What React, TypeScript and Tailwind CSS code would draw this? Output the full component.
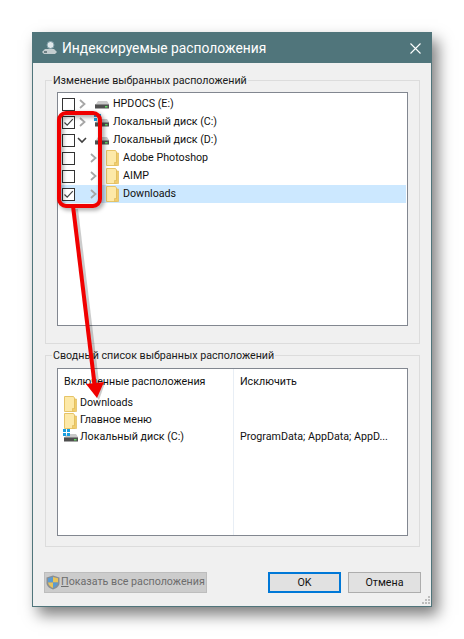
import type { ReactNode } from 'react';

function Chevron(props: { open?: boolean }) {
  if (props.open) {
    return (
      <svg width="10" height="10" viewBox="0 0 10 10" className="shrink-0">
        <path d="M1 3 L5 7 L9 3" fill="none" stroke="#404040" strokeWidth="1.6" />
      </svg>
    );
  }
  return (
    <svg width="10" height="10" viewBox="0 0 10 10" className="shrink-0">
      <path d="M3 1 L7.5 5 L3 9" fill="none" stroke="#a6a6a6" strokeWidth="1.8" />
    </svg>
  );
}

function CheckBox(props: { checked?: boolean }) {
  return (
    <div className="w-[13px] h-[13px] shrink-0 border border-[#333333] bg-white flex items-center justify-center">
      {props.checked ? (
        <svg width="11" height="11" viewBox="0 0 11 11">
          <path d="M1.5 5.5 L4.2 8.2 L9.8 2.2" fill="none" stroke="#444444" strokeWidth="1.2" />
        </svg>
      ) : null}
    </div>
  );
}

function Folder() {
  return (
    <svg width="13" height="16" viewBox="0 0 13 16" className="shrink-0">
      <path d="M0.5 0.5 H9.5 L10.5 2 V15.5 H0.5 Z" fill="#fde9a8" stroke="#e6c468" />
      <path d="M10.5 3 H12.5 V15.5 H8.5 V12.5 H10.5 Z" fill="#f1cd6d" stroke="#e0bc5c" strokeWidth="0.7" />
    </svg>
  );
}

function Drive(props: { windows?: boolean }) {
  return (
    <svg width="16" height="16" viewBox="0 0 16 16" className="shrink-0">
      <path d="M2 8 L4 5 H13 L15 8 Z" fill="#c9c9c9" />
      <rect x="1" y="8" width="14" height="4.5" fill="#4f4f4f" />
      <rect x="1" y="8" width="14" height="1" fill="#8a8a8a" />
      <rect x="11" y="10" width="2.5" height="1.5" fill="#63d863" />
      {props.windows ? (
        <g fill="#1a9fe0">
          <rect x="0" y="0" width="3" height="3" />
          <rect x="4" y="0" width="3" height="3" />
          <rect x="0" y="4" width="3" height="3" />
          <rect x="4" y="4" width="3" height="3" />
        </g>
      ) : null}
    </svg>
  );
}

function Row(props: { checked?: boolean; open?: boolean; nested?: boolean; selected?: boolean; icon: ReactNode; label: string }) {
  const { checked, open, nested, selected, icon, label } = props;
  return (
    <div className={selected ? 'h-[18px] flex items-center pl-[4px] bg-[#cce8ff]' : 'h-[18px] flex items-center pl-[4px]'}>
      <CheckBox checked={checked} />
      <div className={nested ? 'w-[31px] pl-[13px] flex items-center' : 'w-[19px] pl-[2px] flex items-center'}>
        <Chevron open={open} />
      </div>
      <div className={nested ? 'w-[17px] flex items-center' : 'w-[19px] flex items-center'}>{icon}</div>
      <span>{label}</span>
    </div>
  );
}

function Group(props: { title: string; className: string; children: ReactNode }) {
  return (
    <div className={'relative border border-[#dcdcdc] ' + props.className}>
      <span className="absolute left-[6px] top-[-9px] bg-[#f0f0f0] px-px leading-[18px] text-[#1a1a1a] whitespace-nowrap">{props.title}</span>
      {props.children}
    </div>
  );
}

export default function App() {
  return (
    <div className="relative w-[464px] h-[639px] bg-white pl-[32px] pt-[32px] text-[10.7px] text-[#111111] overflow-hidden" style={{ fontFamily: 'Roboto, "Noto Sans", sans-serif' }}>
      <div className="w-[400px] h-[575px] flex flex-col border border-[#50757b] bg-[#f0f0f0] shadow-[6px_8px_14px_rgba(0,0,0,0.5)]">
        <div className="h-[30px] shrink-0 bg-[#50757b] flex items-center pl-[8px] pr-[10px] text-white">
          <svg width="18" height="16" viewBox="0 0 18 16" className="shrink-0">
            <path d="M1 12 L4 9 H13 L16 12 L14 14 H3 Z" fill="#c4ced0" />
            <circle cx="9.5" cy="5" r="3.5" fill="#dfe8ea" stroke="#7f9ea8" />
            <rect x="3" y="11" width="3" height="2" fill="#6e8084" />
          </svg>
          <span className="ml-[3px] text-[13.8px]">Индексируемые расположения</span>
          <svg width="11" height="11" viewBox="0 0 11 11" className="ml-auto">
            <path d="M0.5 0.5 L10.5 10.5 M10.5 0.5 L0.5 10.5" stroke="#ffffff" strokeWidth="1.1" />
          </svg>
        </div>

        <div className="flex-1 flex flex-col pl-[12px] pr-[11px] pt-[17px]">
          <Group title="Изменение выбранных расположений" className="h-[264px] pl-[11px] pr-[11px] pt-[11px]">
            <div className="h-[234px] border border-[#828790] bg-white pt-[2px] pr-[1px]">
              <Row icon={<Drive />} label="HPDOCS (E:)" />
              <Row checked icon={<Drive windows />} label="Локальный диск (C:)" />
              <Row open icon={<Drive />} label="Локальный диск (D:)" />
              <Row nested icon={<Folder />} label="Adobe Photoshop" />
              <Row nested icon={<Folder />} label="AIMP" />
              <Row nested selected checked icon={<Folder />} label="Downloads" />
            </div>
          </Group>

          <Group title="Сводный список выбранных расположений" className="mt-[11px] h-[192px] pl-[11px] pr-[11px] pt-[12px]">
            <div className="h-[168px] border border-[#828790] bg-white flex">
              <div className="w-[176px] border-r border-[#e8eef5] pl-[6px] pt-[4px]">
                <div className="h-[18px] leading-[18px] mb-[4px]">Включенные расположения</div>
                <div className="h-[17px] flex items-center">
                  <div className="w-[16px]"><Folder /></div>
                  <span>Downloads</span>
                </div>
                <div className="h-[17px] flex items-center">
                  <div className="w-[16px]"><Folder /></div>
                  <span>Главное меню</span>
                </div>
                <div className="h-[16px] flex items-center">
                  <div className="w-[17px] -ml-px"><Drive windows /></div>
                  <span>Локальный диск (C:)</span>
                </div>
              </div>
              <div className="flex-1 pl-[6px] pt-[4px]">
                <div className="h-[18px] leading-[18px] mb-[37px]">Исключить</div>
                <div className="h-[18px] leading-[18px] whitespace-nowrap">ProgramData; AppData; AppD...</div>
              </div>
            </div>
          </Group>

          <div className="mt-[25px] flex items-center">
            <div className="w-[163px] h-[21px] -ml-[1px] border border-[#bdbdbd] bg-[#cccccc] flex items-center text-[#6d6d6d] whitespace-nowrap">
              <svg width="14" height="15" viewBox="0 0 14 15" className="shrink-0 ml-[1px]">
                <path d="M7 0.5 L13.5 2.5 V8 C13.5 11.5 10 13.5 7 14.5 C4 13.5 0.5 11.5 0.5 8 V2.5 Z" fill="#8a8f94" />
                <path d="M7 2 V7.5 H2 V3.2 Z" fill="#5c9bd1" />
                <path d="M7 2 L12 3.2 V7.5 H7 Z" fill="#e8c35c" />
                <path d="M7 7.5 H2 C2.3 10.5 5 12.3 7 13 Z" fill="#e8c35c" />
                <path d="M7 7.5 H12 C11.7 10.5 9 12.3 7 13 Z" fill="#5c9bd1" />
              </svg>
              <span className="ml-[1px]"><span className="underline">П</span>оказать все расположения</span>
            </div>
            <div className="ml-auto w-[73px] h-[21px] pt-px border-2 border-[#0078d7] bg-[#e1e1e1] flex items-center justify-center">OK</div>
            <div className="ml-[7px] mr-[-1px] w-[73px] h-[21px] pt-px border border-[#adadad] bg-[#e1e1e1] flex items-center justify-center">Отмена</div>
          </div>
        </div>
      </div>

      {/* red annotation drawn over the dialog */}
      <div className="absolute left-[57px] top-[111px] w-[45px] h-[97px] rounded-[9px] border-[4px] border-[#f00000] drop-shadow-[2px_2px_2px_rgba(0,0,0,0.4)]" />
      <svg width="464" height="639" viewBox="0 0 464 639" className="absolute left-0 top-0 pointer-events-none">
        <path d="M73 207 L95 388" fill="none" stroke="#000000" strokeOpacity="0.2" strokeWidth="4" transform="translate(3 2)" />
        <path d="M87 385 L105 383 L99 400 Z" fill="#000000" fillOpacity="0.2" />
        <path d="M73 206 L95 388" fill="none" stroke="#f00000" strokeWidth="4" />
        <path d="M86 384 L104 382 L97 398 Z" fill="#f00000" />
      </svg>

      {/* resize grip */}
      <svg width="9" height="9" viewBox="0 0 9 9" className="absolute left-[421px] top-[596px]">
        <path d="M7 0h2v2h-2z M4 3h2v2h-2z M7 3h2v2h-2z M1 6h2v2h-2z M4 6h2v2h-2z M7 6h2v2h-2z" fill="#bdbdbd" />
      </svg>
    </div>
  );
}
